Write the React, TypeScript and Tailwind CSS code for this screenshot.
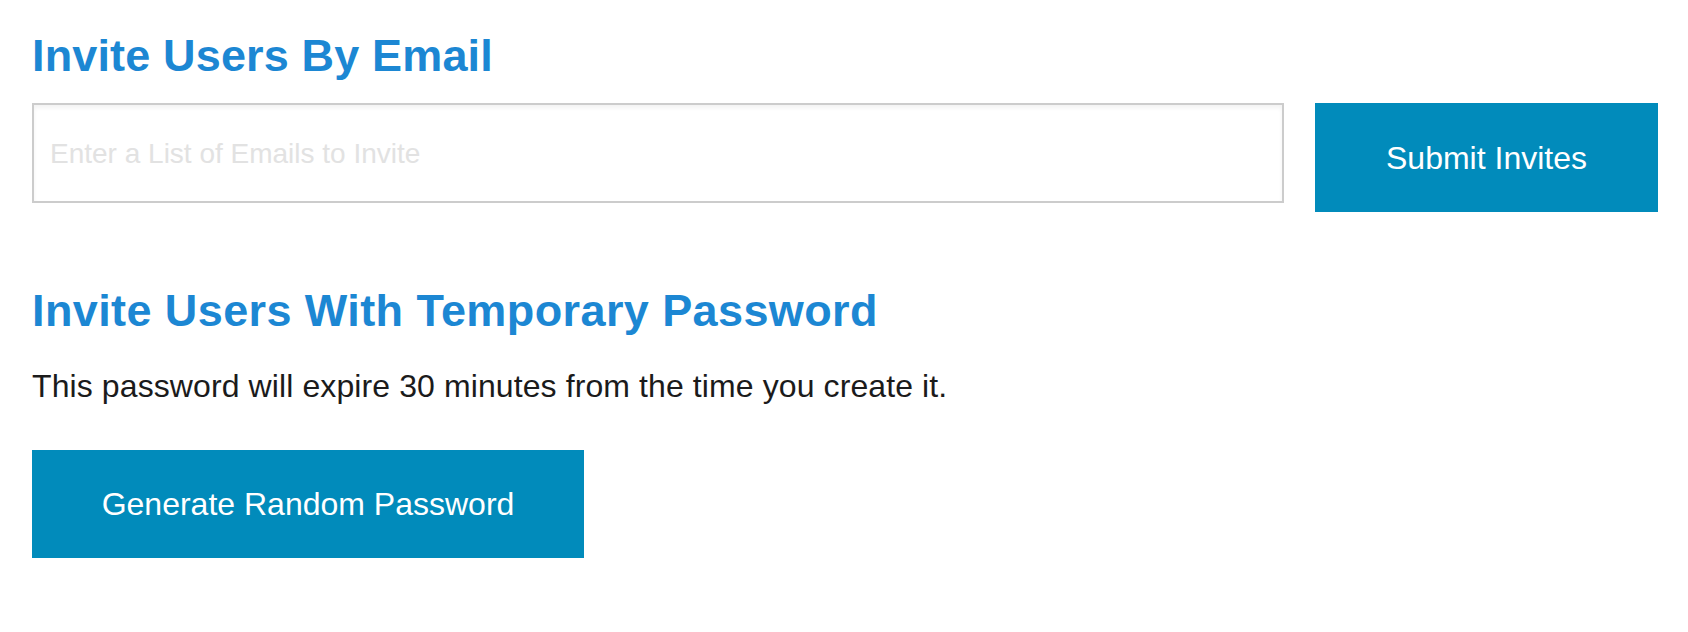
import React from 'react'

function InviteByEmail() {
  return (
    <section>
      <h2 className="text-[45px] leading-[52px] font-bold tracking-[0.15px] text-[#1c87d3]">Invite Users By Email</h2>

      <div className="flex items-start gap-[31px] mt-[21px]">
        <input
          type="text"
          placeholder="Enter a List of Emails to Invite"
          className="flex-1 h-[100px] border-2 border-[#cccccc] bg-white px-[16px] pt-[2px] text-[28px] text-[#333] placeholder:text-[#e2e2e2] shadow-[inset_0_3px_4px_rgba(0,0,0,0.05)] outline-none"
        />
        <button className="w-[343px] h-[109px] bg-[#018bbb] text-white text-[32px] flex items-center justify-center">
          Submit Invites
        </button>
      </div>
    </section>
  )
}

function InviteWithPassword() {
  return (
    <section className="mt-[73px]">
      <h2 className="text-[45px] leading-[52px] font-bold tracking-[0.4px] text-[#1c87d3]">
        Invite Users With Temporary Password
      </h2>
      <p className="mt-[31px] text-[32px] leading-[36px] tracking-[0.1px] text-[#1b1b1b]">
        This password will expire 30 minutes from the time you create it.
      </p>
      <button className="mt-[46px] w-[552px] h-[108px] bg-[#018bbb] text-white text-[32px] flex items-center justify-center">
        Generate Random Password
      </button>
    </section>
  )
}

export default function App() {
  return (
    <div className="w-[1688px] h-[632px] bg-white pt-[30px] pl-[32px] pr-[30px] font-['Liberation_Sans',Arial,sans-serif]">
      <InviteByEmail />
      <InviteWithPassword />
    </div>
  )
}
